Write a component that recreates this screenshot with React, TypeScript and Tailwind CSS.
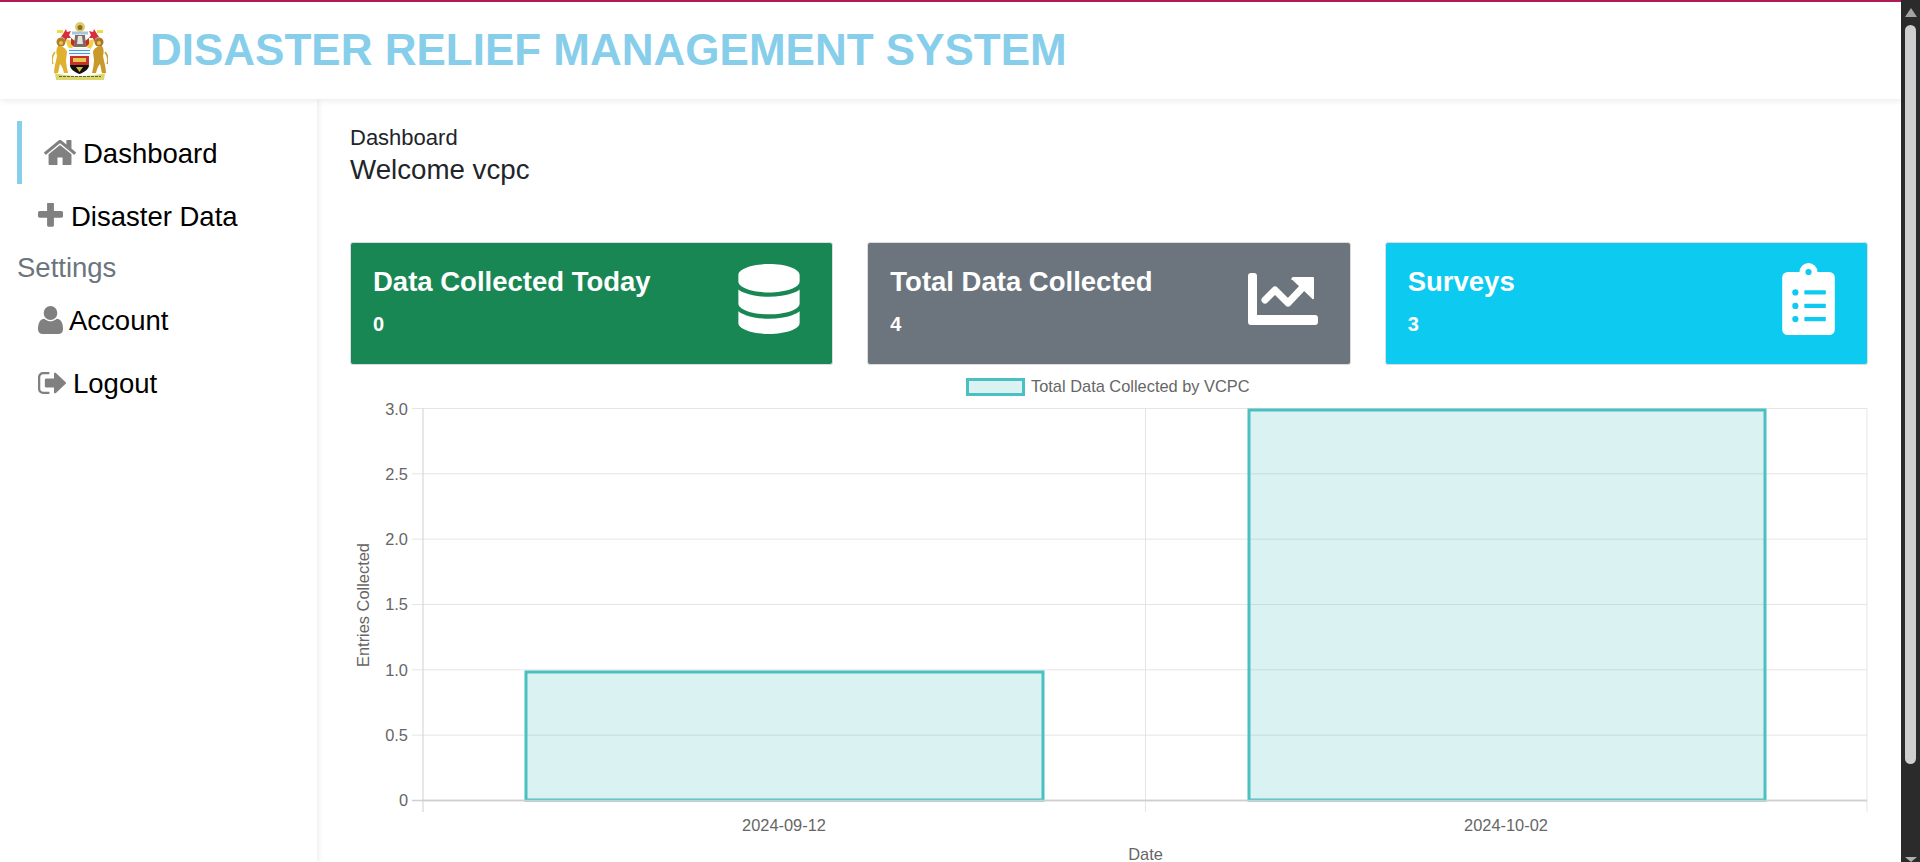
import { FaDatabase } from "react-icons/fa6";
import type { ReactNode } from "react";

function Glyph({ box, d, className }: { box: string; d: string; className: string }) {
  return (
    <svg viewBox={box} className={`${className} shrink-0 fill-[#808080]`} preserveAspectRatio="none">
      <path d={d} />
    </svg>
  );
}

const homePath = "M1472 992v480q0 26-19 45t-45 19h-384v-384h-256v384h-384q-26 0-45-19t-19-45v-480q0-1 .5-3t.5-3l575-474 575 474q1 2 1 6zm223-69l-62 74q-8 9-21 11h-3q-13 0-21-7l-692-577-692 577q-12 8-24 7-13-2-21-11l-62-74q-8-10-7-23.500t11-21.500l719-599q32-26 76-26t76 26l244 204v-195q0-14 9-23t23-9h192q14 0 23 9t9 23v408l219 182q10 8 11 21.500t-7 23.500z";
const plusPath = "M1600 736v192q0 40-28 68t-68 28h-416v416q0 40-28 68t-68 28h-192q-40 0-68-28t-28-68v-416h-416q-40 0-68-28t-28-68v-192q0-40 28-68t68-28h416v-416q0-40 28-68t68-28h192q40 0 68 28t28 68v416h416q40 0 68 28t28 68z";
const userPath = "M1536 1399q0 120-73 189.500t-194 69.500h-874q-121 0-194-69.500t-73-189.500q0-53 3.500-103.500t14-109 26.500-108.500 43-97.500 62-81 85.500-53.500 111.500-20q9 0 42 21.500t74.500 48 108 48 133.500 21.500 133.500-21.500 108-48 74.500-48 42-21.500q61 0 111.500 20t85.500 53.500 62 81 43 97.500 26.500 108.500 14 109 3.500 103.500zm-320-893q0 159-112.500 271.500t-271.500 112.500-271.500-112.500-112.500-271.500 112.500-271.500 271.500-112.500 271.500 112.500 112.500 271.500z";
const signOutPath = "M704 1440q0 4 1 20t.5 26.500-3 23.500-10 19.500-20.500 6.500h-320q-119 0-203.500-84.500t-84.500-203.500v-704q0-119 84.500-203.500t203.500-84.500h320q13 0 22.500 9.500t9.500 22.500q0 4 1 20t.5 26.500-3 23.500-10 19.500-20.500 6.500h-320q-66 0-113 47t-47 113v704q0 66 47 113t113 47h312l11.500 1 11.500 3 8 5.500 7 9 2 13.500zm928-544q0 26-19 45l-544 544q-19 19-45 19t-45-19-19-45v-288h-448q-26 0-45-19t-19-45v-384q0-26 19-45t45-19h448v-288q0-26 19-45t45-19 45 19l544 544q19 19 19 45z";

function TrendIcon() {
  return (
    <svg viewBox="0 0 70 52" className="h-[52px] w-[70px] fill-white">
      <path d="M3 0h3a3 3 0 0 1 3 3v39h58a3 3 0 0 1 3 3v4a3 3 0 0 1-3 3H3a3 3 0 0 1-3-3V3a3 3 0 0 1 3-3z" />
      <path d="M17 27l10-10 13 13 17-18" fill="none" stroke="white" strokeWidth="7" strokeLinecap="round" strokeLinejoin="round" />
      <path d="M44 5a1 1 0 0 1 1-1h20a1 1 0 0 1 1 1v20a1 1 0 0 1-1.500 1l-20-19a1 1 0 0 1-.5-2z" />
    </svg>
  );
}

function ClipboardIcon({ hole }: { hole: string }) {
  return (
    <svg viewBox="1168 100 152 208" className="h-[72px] w-[53px]">
      <path d="M1184 126h34a26 26 0 0 1 52 0h34a16 16 0 0 1 16 16v150a16 16 0 0 1-16 16h-120a16 16 0 0 1-16-16V142a16 16 0 0 1 16-16z" fill="white" />
      <circle cx="1244" cy="126" r="9" fill={hole} />
      {[185, 224, 262].map((y) => (
        <g key={y} fill={hole}>
          <circle cx="1206" cy={y} r="9" />
          <rect x="1232" y={y - 6} width="62" height="12" rx="2" />
        </g>
      ))}
    </svg>
  );
}

function Lion({ body, head }: { body: string; head: string }) {
  return (
    <g>
      <path d="M3 30C0 34-1 38 1 42" fill="none" stroke={body} strokeWidth="1.500" />
      <path d="M6 24C10 24 14 26 15 30L14 38C14 42 15 46 16 51L12 51C11 47 10 44 8 42C7 45 7 48 6 51L2 51C2 45 4 40 5 34C4 30 4 27 6 24z" fill={body} />
      <circle cx="9" cy="20" r="4.500" fill={head} />
      <circle cx="9" cy="21" r="2" fill="#e6c24a" />
    </g>
  );
}

function Crest() {
  return (
    <svg viewBox="0 0 56 58" className="h-[58px] w-[56px] shrink-0 blur-[0.4px]">
      <circle cx="28" cy="5" r="5" fill="#d8bb4c" opacity="0.8" />
      <circle cx="28" cy="5.500" r="2.500" fill="#8f6f1f" />
      <rect x="5" y="8" width="6" height="3" fill="#f0dc40" />
      <rect x="45" y="8" width="6" height="3" fill="#f0dc40" />
      <path d="M11 12l3-5 1 3 4-1-2 4 2 3-4 0-1 4-2-4-3-1z" fill="#d92f3a" />
      <path d="M45 12l-3-5-1 3-4-1 2 4-2 3 4 0 1 4 2-4 3-1z" fill="#d92f3a" />
      <rect x="20" y="9.500" width="16" height="3" fill="#a9c3dc" />
      <path d="M23 13h10l1 12H22z" fill="#7b6d62" />
      <path d="M26 14h4l1 8h-6z" fill="#e8e4dc" />
      <path d="M14 17l6 2 1 6-3 3-3-5z" fill="#ecd23c" />
      <path d="M42 17l-6 2-1 6 3 3 3-5z" fill="#ecd23c" />
      <path d="M19 16l4 3-1 6-3-3z" fill="#c92a32" />
      <path d="M37 16l-4 3 1 6 3-3z" fill="#c92a32" />
      <rect x="17" y="26" width="21" height="8" fill="#eef6fc" />
      <path d="M17 28.500h21M17 31.500h21" stroke="#4f9bd0" strokeWidth="1.200" />
      <rect x="18" y="34" width="19" height="9" fill="#c9302c" />
      <rect x="21" y="36" width="13" height="4" fill="#e8c84a" />
      <path d="M18 43h19c0 4-4 7-9.500 9C22 50 18 47 18 43z" fill="#111" />
      <path d="M24 45l3.500 5 3.500-5z" fill="#d8b838" />
      <Lion body="#dfb12f" head="#b07d28" />
      <g transform="translate(56,0) scale(-1,1)">
        <Lion body="#c99a2b" head="#a8752a" />
      </g>
      <path d="M3 51c7 2 14 3 25 3s18-1 25-3l-1 7H4z" fill="#dcd76a" />
      <path d="M7 54.500h42" stroke="#5c6338" strokeWidth="1" strokeDasharray="3 1" />
    </svg>
  );
}

function NavRow({ icon, label, gap, active }: { icon: ReactNode; label: string; gap: string; active?: boolean }) {
  return (
    <div className={`flex h-[63px] items-center ${active ? "ml-[17px] border-l-[5px] border-[#87ceeb] pl-[22px]" : "pl-[38px]"}`}>
      {icon}
      <span className={`${gap} pt-[2px] text-[27.500px] text-black`}>{label}</span>
    </div>
  );
}

function Card({ title, value, bg, icon }: { title: string; value: string; bg: string; icon: ReactNode }) {
  return (
    <div className={`relative h-[123px] rounded-[3px] border border-[#dcdcdc] ${bg} text-white`}>
      <div className="pl-[22px] pt-[22px] font-bold">
        <div className="text-[27.500px] leading-[33px]">{title}</div>
        <div className="mt-[14px] text-[20px] leading-[24px]">{value}</div>
      </div>
      <div className="absolute top-[20px] right-[32px] flex h-[72px] items-center justify-end">{icon}</div>
    </div>
  );
}

function Chart() {
  const left = 423;
  const right = 1867;
  const top = 408.5;
  const step = 65.33;
  const rows = ["3.0", "2.5", "2.0", "1.5", "1.0", "0.5", "0"];
  const teal = "#4bc0c0";
  return (
    <svg viewBox="350 372 1518 490" className="block h-[490px] w-[1518px]" fontFamily="'Liberation Sans', Arial, sans-serif" fontSize="16.400" fill="#666">
      <rect x="967.500" y="379.500" width="56" height="15" fill="#4bc0c0" fillOpacity="0.2" stroke={teal} strokeWidth="3" />
      <text x="1031" y="391.500">Total Data Collected by VCPC</text>

      {rows.map((r, i) => {
        const y = top + i * step;
        return (
          <g key={r}>
            <line x1="412" x2={right} y1={y} y2={y} stroke={i === 6 ? "#cfcfcf" : "#e5e5e5"} strokeWidth={i === 6 ? 1.500 : 1} />
            <text x="408" y={y + 6} textAnchor="end">{r}</text>
          </g>
        );
      })}
      <line x1={left} x2={left} y1={top} y2="812" stroke="#cfcfcf" />
      <line x1="1145.500" x2="1145.500" y1={top} y2="812" stroke="#e5e5e5" />
      <line x1={right} x2={right} y1={top} y2="812" stroke="#e5e5e5" />

      <rect x="526" y="672" width="517" height="128" fill="#4bc0c0" fillOpacity="0.2" stroke={teal} strokeWidth="3" />
      <rect x="1249" y="410" width="516" height="390" fill="#4bc0c0" fillOpacity="0.2" stroke={teal} strokeWidth="3" />
      <line x1={left} x2={right} y1="800.500" y2="800.500" stroke="#cfcfcf" strokeWidth="1.500" />

      <text x="784" y="831" textAnchor="middle">2024-09-12</text>
      <text x="1506" y="831" textAnchor="middle">2024-10-02</text>
      <text x="1145.500" y="860" textAnchor="middle">Date</text>
      <text transform="translate(369,605) rotate(-90)" textAnchor="middle">Entries Collected</text>
    </svg>
  );
}

function Scrollbar() {
  return (
    <div className="flex h-[862px] w-[19px] shrink-0 flex-col items-center bg-[#2b2b2b]">
      <div className="mt-[8px] h-0 w-0 border-x-[6px] border-b-[9px] border-x-transparent border-b-[#a3a3a3]" />
      <div className="mt-[8px] h-[739px] w-[11px] rounded-[6px] bg-[#cfcfcf]" />
      <div className="mt-auto h-0 w-0 border-x-[6px] border-t-[5px] border-x-transparent border-t-[#b0b0b0]" />
    </div>
  );
}

export default function App() {
  return (
    <div className="flex h-[862px] w-[1920px] overflow-hidden bg-white font-['Liberation_Sans',Arial,sans-serif]">
      <div className="flex min-w-0 flex-1 flex-col">
        <header className="relative z-20 flex h-[99px] items-center border-t-2 border-[#b0195a] bg-white pl-[52px] shadow-[0_2px_6px_rgba(0,0,0,0.08)]">
          <Crest />
          <h1 className="ml-[42px] pb-[2px] text-[44px] font-bold text-[#87ceeb]">DISASTER RELIEF MANAGEMENT SYSTEM</h1>
        </header>
        <div className="flex min-h-0 flex-1">
          <aside className="relative z-10 w-[317px] shrink-0 bg-white pt-[22px] shadow-[2px_0_5px_rgba(0,0,0,0.07)]">
            <NavRow active label="Dashboard" gap="ml-[7px]" icon={<Glyph box="90 256 1610 1280" d={homePath} className="h-[25px] w-[32px]" />} />
            <NavRow label="Disaster Data" gap="ml-[8px]" icon={<Glyph box="192 192 1408 1408" d={plusPath} className="h-[25px] w-[25px]" />} />
            <div className="h-[41px] pl-[17px] text-[27.500px] leading-[41px] text-[#6c757d]">Settings</div>
            <NavRow label="Account" gap="ml-[6px]" icon={<Glyph box="128 122 1408 1536" d={userPath} className="h-[28px] w-[25px]" />} />
            <NavRow label="Logout" gap="ml-[7px]" icon={<Glyph box="64 256 1568 1280" d={signOutPath} className="h-[22px] w-[28px]" />} />
          </aside>
          <main className="min-w-0 flex-1 pl-[33px] pt-[26px]">
            <div className="text-[22px] leading-[26px] text-[#212529]">Dashboard</div>
            <div className="mt-[2px] text-[27.700px] leading-[34px] text-[#212529]">Welcome vcpc</div>
            <div className="mt-[55px] grid w-[1518px] grid-cols-3 gap-[34px]">
              <Card title="Data Collected Today" value="0" bg="bg-[#198754]" icon={<FaDatabase className="h-[70px] w-[62px]" />} />
              <Card title="Total Data Collected" value="4" bg="bg-[#6c757d]" icon={<TrendIcon />} />
              <Card title="Surveys" value="3" bg="bg-[#0dcaf0]" icon={<ClipboardIcon hole="#0dcaf0" />} />
            </div>
            <div className="mt-[7px]">
              <Chart />
            </div>
          </main>
        </div>
      </div>
      <Scrollbar />
    </div>
  );
}
